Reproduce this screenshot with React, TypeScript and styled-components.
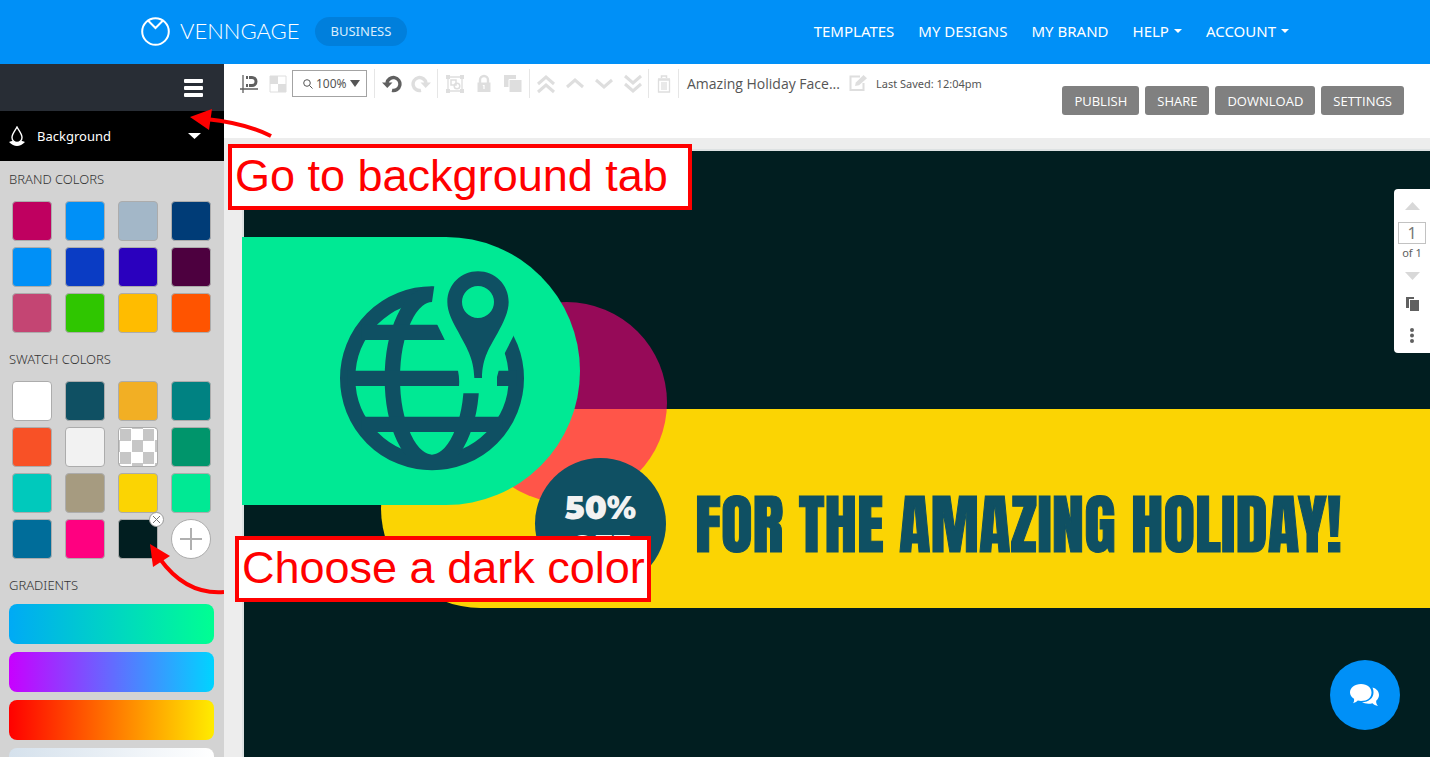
import React from "react";
import styled, { createGlobalStyle } from "styled-components";

const GlobalStyle = createGlobalStyle`
  *, *::before, *::after { box-sizing: border-box; }
  body { margin: 0; font-family: "Noto Sans", "Open Sans", sans-serif; color: #333; }
  button, input, select { font: inherit; color: inherit; margin: 0; }
  button { border: 0; padding: 0; background: none; cursor: pointer; }
  a { color: inherit; text-decoration: none; }
  svg { display: block; }
`;

const Page = styled.div`
  position: relative;
  display: flex;
  flex-direction: column;
  height: 100vh;
  overflow: hidden;
`;

/* ---------- Site header ---------- */
const Header = styled.header`
  flex: none;
  background: #0090f7;
  color: #fff;
`;
const HeaderInner = styled.div`
  display: flex;
  align-items: center;
  justify-content: space-between;
  max-width: 1148px;
  height: 64px;
  margin: 0 auto;
  padding-bottom: 2px;
`;
const Brand = styled.div`
  display: flex;
  align-items: center;
  gap: 15px;
`;
const LogoLink = styled.a`
  display: flex;
  align-items: center;
  gap: 10px;
  font: 300 22px/28px Lato, sans-serif;
`;
const Plan = styled.button`
  height: 29px;
  padding: 0 16px;
  border-radius: 15px;
  background: #007fdc;
  color: #d9eefd;
  font-size: 13px;
`;
const Nav = styled.nav`
  display: flex;
  gap: 24px;
  font-size: 15px;
  line-height: 24px;
`;
const NavLink = styled.a`
  display: flex;
  align-items: center;
  gap: 5px;
`;

/* ---------- Sidebar ---------- */
const Body = styled.div`
  display: flex;
  flex: 1;
  min-height: 0;
`;
const Sidebar = styled.aside`
  display: flex;
  flex-direction: column;
  flex: none;
  width: 224px;
  background: #d3d3d3;
  overflow: hidden;
`;
const SidebarTop = styled.div`
  display: flex;
  flex: none;
  justify-content: flex-end;
  align-items: center;
  height: 47px;
  padding-right: 21px;
  background: #282d35;
`;
const TabButton = styled.button`
  display: flex;
  flex: none;
  align-items: center;
  height: 50px;
  padding: 0 23px 0 9px;
  gap: 12px;
  background: #000;
  color: #fff;
  font-size: 13px;
  text-align: left;
`;
const TabLabel = styled.span`
  flex: 1;
`;
const SidebarBody = styled.div`
  display: flex;
  flex-direction: column;
  gap: 16px;
  padding-top: 8px;
`;
const Section = styled.section``;
const SectionTitle = styled.h2`
  margin: 0 9px;
  font-size: 13px;
  font-weight: 300;
  line-height: 20px;
`;
const SwatchGrid = styled.div`
  display: grid;
  grid-template-columns: repeat(4, 40px);
  gap: 6px 13px;
  padding: 12px 12px 0;
`;
const SwatchCell = styled.div`
  position: relative;
  height: 40px;
`;
const Swatch = styled.button<{ $color: string }>`
  display: block;
  width: 40px;
  height: 40px;
  border: 1px solid #acacac;
  border-radius: 4px;
  background: ${(p) => p.$color};
  overflow: hidden;
`;
const RemoveSwatch = styled.button`
  position: absolute;
  top: -7px;
  right: -6px;
  display: grid;
  place-items: center;
  width: 15px;
  height: 15px;
  border: 1px solid #999;
  border-radius: 50%;
  background: #fff;
`;
const AddSwatch = styled.button`
  display: grid;
  place-items: center;
  width: 40px;
  height: 40px;
  border: 1px solid #acacac;
  border-radius: 50%;
  background: #fff;
`;
const GradientList = styled.div`
  display: flex;
  flex-direction: column;
  gap: 8px;
  padding: 9px 10px 0 9px;
`;
const GradientBar = styled.button<{ $from: string; $to: string }>`
  height: 40px;
  border-radius: 8px;
  background: linear-gradient(90deg, ${(p) => p.$from}, ${(p) => p.$to});
`;

/* ---------- Toolbar ---------- */
const Main = styled.main`
  display: flex;
  flex-direction: column;
  flex: 1;
  min-width: 0;
`;
const Toolbar = styled.div`
  display: flex;
  flex: none;
  justify-content: space-between;
  height: 74px;
  padding: 5px 26px 0 0;
  background: #fff;
`;
const Tools = styled.div`
  display: flex;
  height: 29px;
`;
const ToolGroup = styled.div<{ $pad?: string }>`
  display: flex;
  align-items: center;
  padding: ${(p) => p.$pad ?? "0 2px"};
  border-right: 1px solid #e6e6e6;
`;
const Tool = styled.button<{ $active?: boolean }>`
  display: grid;
  place-items: center;
  width: 29px;
  height: 27px;
  color: ${(p) => (p.$active ? "#606060" : "#dedede")};
`;
const ZoomBox = styled.label`
  display: flex;
  align-items: center;
  width: 75px;
  height: 27px;
  padding: 0 6px 0 10px;
  gap: 3px;
  border: 1px solid #a3a3a3;
  color: #555;
`;
const ZoomSelect = styled.select`
  flex: 1;
  min-width: 0;
  padding: 0;
  border: 0;
  background: none;
  appearance: none;
  font-size: 12px;
`;
const DocInfo = styled.div`
  display: flex;
  align-items: center;
  padding-left: 8px;
  color: #555;
`;
const DocTitle = styled.h1`
  width: 156px;
  margin: 0;
  font: 400 14px/20px "Open Sans", sans-serif;
  white-space: nowrap;
`;
const Saved = styled.span`
  font-size: 11px;
  padding-left: 4px;
  white-space: nowrap;
`;
const Actions = styled.div`
  display: flex;
  gap: 6px;
  padding-top: 17px;
`;
const Action = styled.button`
  height: 29px;
  padding: 0 12px;
  border-radius: 3px;
  background: #808080;
  color: #fff;
  font: 13px/18px "Open Sans", sans-serif;
`;

/* ---------- Canvas ---------- */
const Workspace = styled.div`
  position: relative;
  flex: 1;
  min-height: 0;
  padding: 11px 0 0 18px;
  background: #ededed;
  overflow: hidden;
`;
const Canvas = styled.div`
  position: relative;
  height: 100%;
  border: 2px solid #dde1e2;
  border-width: 2px 0 0 2px;
  background: #011e20;
`;
const YellowBand = styled.div`
  position: absolute;
  top: 258px;
  left: 137px;
  right: 0;
  height: 199px;
  border-radius: 100px 0 0 100px;
  background: #fbd403;
`;
const RedDisc = styled.div`
  position: absolute;
  top: 151px;
  left: 222px;
  width: 201px;
  height: 201px;
  border-radius: 50%;
  background: linear-gradient(#960a58 107px, #ff5549 107px);
`;
const GreenTab = styled.div`
  position: absolute;
  top: 86px;
  left: -2px;
  width: 338px;
  height: 268px;
  border-radius: 0 134px 134px 0;
  background: #00e994;
  color: #0f5063;
`;
const GlobeArt = styled.svg`
  margin: 34px 0 0 98px;
`;
const OfferDisc = styled.div`
  position: absolute;
  top: 307px;
  left: 291px;
  width: 131px;
  height: 131px;
  padding-top: 33px;
  border-radius: 50%;
  background: #0f5063;
  color: #f2f2f2;
  font: 900 32px/34px Montserrat, Lato, sans-serif;
  text-align: center;
`;
const OfferNote = styled.div`
  font-size: 28px;
  line-height: 40px;
`;
const Headline = styled.div`
  position: absolute;
  top: 334px;
  left: 451px;
  color: #0f5063;
  font: 400 65px/80px Anton, "Liberation Sans Narrow", "Liberation Sans", sans-serif;
  -webkit-text-stroke: 1px #0f5063;
  white-space: nowrap;
`;

/* ---------- Floating controls ---------- */
const PagePanel = styled.div`
  position: absolute;
  top: 51px;
  right: 0;
  display: flex;
  flex-direction: column;
  align-items: center;
  width: 36px;
  height: 164px;
  padding-top: 13px;
  border-radius: 4px 0 0 4px;
  background: #fff;
  color: #606060;
`;
const PageArrow = styled.button`
  color: #d8d8d8;
`;
const PageInput = styled.input`
  width: 28px;
  height: 22px;
  margin-top: 12px;
  padding: 0;
  border: 1px solid #c2c2c2;
  background: #fff;
  color: #777;
  font-size: 16px;
  text-align: center;
`;
const PageCount = styled.span`
  margin-bottom: 10px;
  font-size: 11px;
  line-height: 18px;
`;
const PanelButton = styled.button`
  margin-top: 17px;
`;
const ChatButton = styled.button`
  position: absolute;
  right: 30px;
  bottom: 27px;
  display: grid;
  place-items: center;
  width: 70px;
  height: 70px;
  border-radius: 50%;
  background: #0090f7;
  color: #fff;
`;

/* ---------- Tutorial callouts ---------- */
const Callout = styled.div<{ $top: number; $left: number; $width: number }>`
  position: absolute;
  top: ${(p) => p.$top}px;
  left: ${(p) => p.$left}px;
  width: ${(p) => p.$width}px;
  height: 66px;
  padding-left: 3px;
  border: 4px solid #f00;
  background: #fff;
  color: #f00;
  font: 45px/56px "Liberation Sans", Arial, sans-serif;
  white-space: nowrap;
`;
const CalloutArrow = styled.svg<{ $top: number; $left: number }>`
  position: absolute;
  top: ${(p) => p.$top}px;
  left: ${(p) => p.$left}px;
  pointer-events: none;
`;

const Triangle = ({ w, h, up }: { w: number; h: number; up?: boolean }) => (
  <svg width={w} height={h} viewBox="0 0 10 10" preserveAspectRatio="none" fill="currentColor">
    <path d={up ? "M0 10L5 0L10 10Z" : "M0 0H10L5 10Z"} />
  </svg>
);

const Icon = ({ children }: { children: React.ReactNode }) => (
  <svg width="20" height="20" viewBox="0 0 20 20" fill="none" stroke="currentColor" strokeWidth="3">
    {children}
  </svg>
);

const MagnetIcon = () => (
  <Icon>
    <path d="M4 1V19M1 15H19" strokeWidth="1.3" />
    <path d="M7 3.500H13A4 4 0 0 1 13 11.500H7" strokeWidth="3" />
    <path d="M9.500 1V13" stroke="#fff" strokeWidth="1" />
  </Icon>
);
const CheckerIcon = () => (
  <Icon>
    <path d="M2 2H18V18H2Z" strokeWidth="1" />
    <path d="M2 2H10V10H2ZM10 10H18V18H10Z" fill="currentColor" stroke="none" />
  </Icon>
);
const UndoIcon = ({ flip }: { flip?: boolean }) => (
  <Icon>
    <g transform={flip ? "matrix(-1 0 0 1 20 0)" : undefined}>
      <path d="M5 9A6.500 6.500 0 1 1 10 16.400" strokeWidth="3.400" />
      <path d="M0 8.500H10.500L5.300 14Z" fill="currentColor" stroke="none" />
    </g>
  </Icon>
);
const GroupIcon = () => (
  <Icon>
    <path d="M3 3H17V17H3Z" strokeWidth="1.300" />
    <path d="M1 1H5V5H1ZM15 1H19V5H15ZM1 15H5V19H1ZM15 15H19V19H15Z" fill="currentColor" stroke="none" />
    <path d="M6 6H11V11H6Z" strokeWidth="1.500" />
    <circle cx="12" cy="12" r="2.800" strokeWidth="1.500" />
  </Icon>
);
const LockIcon = () => (
  <Icon>
    <path d="M6 9V6A4 4 0 0 1 14 6V9" strokeWidth="2.400" />
    <path d="M3.500 8.500H16.500V18H3.500Z" fill="currentColor" stroke="none" />
    <path d="M10 11V15M8.800 11.500H10" stroke="#fff" strokeWidth="1.200" />
  </Icon>
);
const CopyIcon = () => (
  <Icon>
    <path d="M1 1H13V13H1Z" fill="currentColor" stroke="none" />
    <path d="M6 5.500H19V18.500H6Z" fill="currentColor" stroke="#fff" strokeWidth="1" />
  </Icon>
);
const Chevrons = ({ d }: { d: string }) => (
  <Icon>
    <path d={d} />
  </Icon>
);
const TrashIcon = () => (
  <Icon>
    <path d="M4 5H16M7.500 4V2H12.500V4" strokeWidth="1.500" />
    <path d="M4.500 6H15.500V18H4.500ZM8 8V16M10 8V16M12 8V16" strokeWidth="1.300" />
  </Icon>
);
const EditIcon = () => (
  <Icon>
    <path d="M12 2.500H2.500V16H15.500V9" strokeWidth="2" />
    <path d="M7 12L7.800 8.500L15.500 1L19 4.200L11 11.300Z" fill="currentColor" stroke="none" />
  </Icon>
);

const Globe = () => (
  <GlobeArt width="184" height="200" viewBox="360 152 552 600" fill="none" stroke="currentColor" strokeWidth="46">
    <mask id="pinGap" maskUnits="userSpaceOnUse" x="340" y="130" width="600" height="640">
      <path d="M340 130H940V770H340Z" fill="#fff" stroke="none" />
      <path
        d="M643 140V196L636 245V285L652 313L674 358L700 410L714 451Q719 474 717 497V519H831V470L836 451Q848 425 853 401L880 348L930 250V140Z"
        fill="#000"
        stroke="none"
      />
    </mask>
    <g mask="url(#pinGap)">
      <circle cx="636" cy="474" r="253" />
      <ellipse cx="636" cy="474" rx="119" ry="252" />
      <path d="M425 336H847M383 474H889M425 612H847" />
    </g>
    <path
      d="M774 153C824 153 866 192 866 245C866 275 850 307 833 338C810 380 787 410 786 473H763C761 410 738 380 715 335C698 305 682 275 682 245C682 192 724 153 774 153ZM774 197A48 48 0 1 0 774 293A48 48 0 1 0 774 197Z"
      fill="currentColor"
      fillRule="evenodd"
      stroke="none"
    />
  </GlobeArt>
);

const brandColors = [
  "#bf0060", "#0090f7", "#a3b7c8", "#003c77",
  "#0090f7", "#0a3cc4", "#2a00be", "#4d003f",
  "#c44573", "#2fc600", "#ffbc00", "#ff5400",
];
const checker = "conic-gradient(#fff 25%, #c6c6c6 0 50%, #fff 0 75%, #c6c6c6 0) 1px 1px / 23px 23px";
const swatchColors = [
  "#ffffff", "#0f5063", "#f2af24", "#008282",
  "#f85126", "#f2f2f2", checker, "#00956b",
  "#00c9bc", "#a69b80", "#fbd403", "#00e994",
  "#006d9a", "#ff0080", "#011e20",
];
const gradients = [
  ["#00aaf5", "#00ff92"],
  ["#c800ff", "#00d4ff"],
  ["#ff0000", "#ffec00"],
  ["#d5e1ec", "#ffffff"],
];
const navItems = [
  { label: "TEMPLATES" },
  { label: "MY DESIGNS" },
  { label: "MY BRAND" },
  { label: "HELP", menu: true },
  { label: "ACCOUNT", menu: true },
];

export default function App() {
  return (
    <Page>
      <GlobalStyle />
      <Header>
        <HeaderInner>
          <Brand>
            <LogoLink href="#">
              <svg width="29" height="29" viewBox="0 0 29 29" fill="none" stroke="#fff" strokeWidth="2">
                <circle cx="14.500" cy="14.500" r="13.300" />
                <path d="M7 3.500L14.500 11L22 3.500" />
              </svg>
              VENNGAGE
            </LogoLink>
            <Plan>BUSINESS</Plan>
          </Brand>
          <Nav>
            {navItems.map((item) => (
              <NavLink href="#" key={item.label}>
                {item.label}
                {item.menu && <Triangle w={8} h={4} />}
              </NavLink>
            ))}
          </Nav>
        </HeaderInner>
      </Header>

      <Body>
        <Sidebar>
          <SidebarTop>
            <button aria-label="Menu">
              <svg width="19" height="18" viewBox="0 0 19 18" fill="#fff">
                <rect width="19" height="4" rx="1" />
                <rect y="7" width="19" height="4" rx="1" />
                <rect y="14" width="19" height="4" rx="1" />
              </svg>
            </button>
          </SidebarTop>
          <TabButton>
            <svg width="16" height="20" viewBox="0 0 16 20" fill="none" stroke="#fff" strokeWidth="1.400">
              <path d="M8 1C6 5 3 8 3 11.500A5 5 0 0 0 13 11.500C13 8 10 5 8 1Z" />
              <path d="M0 16Q3 14.500 4 15Q8 17.500 12 15Q13 14.500 16 16Q12 20 8 20Q4 20 0 16Z" fill="#fff" stroke="none" />
            </svg>
            <TabLabel>Background</TabLabel>
            <Triangle w={13} h={6} />
          </TabButton>
          <SidebarBody>
            <Section>
              <SectionTitle>BRAND COLORS</SectionTitle>
              <SwatchGrid>
                {brandColors.map((color, i) => (
                  <Swatch key={i} $color={color} aria-label={`Brand color ${color}`} />
                ))}
              </SwatchGrid>
            </Section>
            <Section>
              <SectionTitle>SWATCH COLORS</SectionTitle>
              <SwatchGrid>
                {swatchColors.map((color, i) => (
                  <SwatchCell key={i}>
                    <Swatch $color={color} aria-label={`Swatch ${i + 1}`} />
                    {i === swatchColors.length - 1 && (
                      <RemoveSwatch aria-label="Remove swatch">
                        <svg width="7" height="7" viewBox="0 0 7 7" stroke="#777" fill="none">
                          <path d="M0 0L7 7M7 0L0 7" />
                        </svg>
                      </RemoveSwatch>
                    )}
                  </SwatchCell>
                ))}
                <AddSwatch aria-label="Add swatch">
                  <svg width="22" height="22" viewBox="0 0 22 22" stroke="#b0b0b0" strokeWidth="2">
                    <path d="M11 0V22M0 11H22" />
                  </svg>
                </AddSwatch>
              </SwatchGrid>
            </Section>
            <Section>
              <SectionTitle>GRADIENTS</SectionTitle>
              <GradientList>
                {gradients.map(([from, to]) => (
                  <GradientBar key={from} $from={from} $to={to} aria-label={`Gradient ${from} to ${to}`} />
                ))}
              </GradientList>
            </Section>
          </SidebarBody>
        </Sidebar>

        <Main>
          <Toolbar>
            <Tools>
              <ToolGroup $pad="0 7px 0 10px">
                <Tool $active aria-label="Snap"><MagnetIcon /></Tool>
                <Tool aria-label="Opacity"><CheckerIcon /></Tool>
                <ZoomBox>
                  <svg width="10" height="10" viewBox="0 0 10 10" fill="none" stroke="currentColor">
                    <circle cx="4" cy="4" r="3.300" />
                    <path d="M6.500 6.500L9.500 9.500" />
                  </svg>
                  <ZoomSelect aria-label="Zoom" defaultValue="100%">
                    <option>100%</option>
                  </ZoomSelect>
                  <Triangle w={10} h={7} />
                </ZoomBox>
              </ToolGroup>
              <ToolGroup>
                <Tool $active aria-label="Undo"><UndoIcon /></Tool>
                <Tool aria-label="Redo"><UndoIcon flip /></Tool>
              </ToolGroup>
              <ToolGroup>
                <Tool aria-label="Group"><GroupIcon /></Tool>
                <Tool aria-label="Lock"><LockIcon /></Tool>
                <Tool aria-label="Duplicate"><CopyIcon /></Tool>
              </ToolGroup>
              <ToolGroup $pad="0 1px">
                <Tool aria-label="Bring to front"><Chevrons d="M2 10L10 3L18 10M2 18L10 11L18 18" /></Tool>
                <Tool aria-label="Bring forward"><Chevrons d="M2 13L10 6L18 13" /></Tool>
                <Tool aria-label="Send backward"><Chevrons d="M2 6L10 13L18 6" /></Tool>
                <Tool aria-label="Send to back"><Chevrons d="M2 2L10 9L18 2M2 10L10 17L18 10" /></Tool>
              </ToolGroup>
              <ToolGroup $pad="0">
                <Tool aria-label="Delete"><TrashIcon /></Tool>
              </ToolGroup>
              <DocInfo>
                <DocTitle>Amazing Holiday Face...</DocTitle>
                <Tool aria-label="Rename"><EditIcon /></Tool>
                <Saved>Last Saved: 12:04pm</Saved>
              </DocInfo>
            </Tools>
            <Actions>
              <Action>PUBLISH</Action>
              <Action>SHARE</Action>
              <Action>DOWNLOAD</Action>
              <Action>SETTINGS</Action>
            </Actions>
          </Toolbar>

          <Workspace>
            <Canvas>
              <YellowBand />
              <RedDisc />
              <GreenTab><Globe /></GreenTab>
              <OfferDisc>
                50%
                <OfferNote>OFF</OfferNote>
              </OfferDisc>
              <Headline>FOR THE AMAZING HOLIDAY!</Headline>
            </Canvas>
            <PagePanel>
              <PageArrow aria-label="Previous page"><Triangle w={15} h={8} up /></PageArrow>
              <PageInput aria-label="Page" defaultValue="1" />
              <PageCount>of 1</PageCount>
              <PageArrow aria-label="Next page"><Triangle w={15} h={8} /></PageArrow>
              <PanelButton aria-label="Duplicate page">
                <svg width="13" height="14" viewBox="0 0 13 14" fill="currentColor">
                  <path d="M0 0H8V2H3V11H0Z" />
                  <path d="M4 3H13V14H4Z" />
                </svg>
              </PanelButton>
              <PanelButton aria-label="More options">
                <svg width="4" height="15" viewBox="0 0 4 15" fill="currentColor">
                  <circle cx="2" cy="2" r="2" />
                  <circle cx="2" cy="7.500" r="2" />
                  <circle cx="2" cy="13" r="2" />
                </svg>
              </PanelButton>
            </PagePanel>
            <ChatButton aria-label="Chat">
              <svg width="30" height="22" viewBox="0 0 30 22" fill="currentColor">
                <path d="M11 0C17.500 0 21.500 3.700 21.500 8.500C21.500 13.500 17.500 17 11 17C9.800 17 8.800 16.900 7.800 16.600C6.500 18 4.500 19 3 19.300C4 18 4.300 16.500 4 14.800C1.500 13.200 0 11 0 8.500C0 3.700 4.500 0 11 0Z" />
                <path d="M22.500 3.500C26.500 4.500 29 7.500 29 11C29 13.200 28 15.200 26.200 16.700C26 18.700 26.500 20.500 28 22C25.500 21.500 23.800 20.500 22.500 19.200C18.500 20.200 14.500 19.600 12 18.300C19 18 23.500 14 23.500 8.500C23.500 6.500 23.200 5 22.500 3.500Z" />
              </svg>
            </ChatButton>
          </Workspace>
        </Main>
      </Body>

      <Callout $top={144} $left={228} $width={464}>Go to background tab</Callout>
      <Callout $top={536} $left={235} $width={416}>Choose a dark color</Callout>
      <CalloutArrow $top={108} $left={188} width="86" height="32" viewBox="188 108 86 32">
        <path d="M206 119Q245 123 271 136" fill="none" stroke="#f00" strokeWidth="4" />
        <path d="M190 117L212 109L209 130Z" fill="#f00" />
      </CalloutArrow>
      <CalloutArrow $top={542} $left={148} width="76" height="54" viewBox="148 542 76 54">
        <path d="M160 559Q186 595 224 592" fill="none" stroke="#f00" strokeWidth="4" />
        <path d="M150 544L170 556L153 567Z" fill="#f00" />
      </CalloutArrow>
    </Page>
  );
}
